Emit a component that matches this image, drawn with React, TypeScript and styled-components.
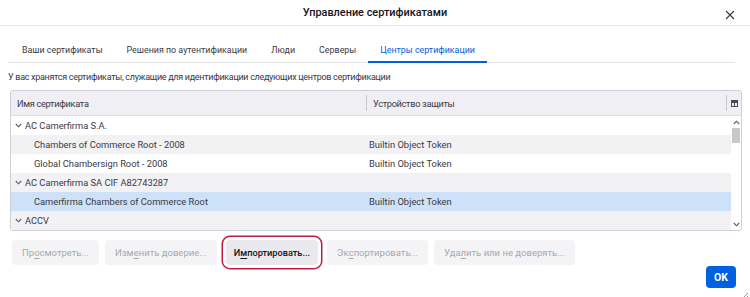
import React from "react";
import styled, { createGlobalStyle } from "styled-components";

const GlobalStyle = createGlobalStyle`
  html, body {
    margin: 0;
    padding: 0;
    background: #ffffff;
  }
  body {
    font-family: Roboto, "Noto Sans", sans-serif;
    color: #15141a;
  }
`;

type TabProps = { active?: boolean };
type RowProps = { striped?: boolean; selected?: boolean };
type ButtonProps = { enabled?: boolean; marked?: boolean };

// whole dialog
const Dialog = styled.div`
  position: relative;
  width: 750px;
  height: 297px;
  display: flex;
  flex-direction: column;
  background: #ffffff;
  overflow: hidden;
`;

const TitleBar = styled.div`
  height: 26px;
  display: flex;
  align-items: center;
  justify-content: center;
  position: relative;
  border-bottom: 1px solid #e8e8e8;
  box-sizing: border-box;
`;

const Title = styled.div`
  font-size: 10.9px;
  font-weight: 500;
  color: #15141a;
`;

const CloseButton = styled.div`
  position: absolute;
  right: 14px;
  top: 6px;
  width: 12px;
  height: 12px;
`;

const Body = styled.div`
  display: flex;
  flex-direction: column;
  padding: 0 8px;
  flex: 1;
`;

const Tabs = styled.div`
  display: flex;
  margin-top: 8px;
  margin-right: 7px;
  height: 28px;
  padding-left: 2px;
  border-bottom: 1px solid #e4e4e4;
`;

const Tab = styled.div<TabProps>`
  display: flex;
  align-items: center;
  padding: 4px 12px 0;
  font-size: 8.9px;
  color: ${(p) => (p.active ? "#0061e0" : "#3a3944")};
  border-bottom: 2px solid ${(p) => (p.active ? "#0061e0" : "transparent")};
  margin-bottom: -1px;
`;

const Description = styled.div`
  margin-top: 7px;
  font-size: 9px;
  letter-spacing: -0.3px;
  color: #3a3944;
  line-height: 14px;
`;

const Table = styled.div`
  margin: 6px 0 0 2px;
  border: 1px solid #cfcfd8;
  border-radius: 3px;
  display: flex;
  flex-direction: column;
  overflow: hidden;
`;

const HeaderRow = styled.div`
  display: grid;
  grid-template-columns: 356px 1fr 14px;
  height: 24px;
  background: #f0f0f4;
  border-bottom: 1px solid #dcdce2;
`;

const HeaderCell = styled.div`
  display: flex;
  align-items: center;
  padding-left: 6px;
  font-size: 9.2px;
  letter-spacing: -0.3px;
  color: #3a3944;
  border-right: 1px solid #c8c8d0;
  margin: 4px 0;
`;

const PickerCell = styled.div`
  display: flex;
  align-items: center;
  justify-content: center;
`;

const RowsArea = styled.div`
  display: flex;
`;

const Rows = styled.div`
  flex: 1;
  display: flex;
  flex-direction: column;
`;

const Row = styled.div<RowProps>`
  display: grid;
  grid-template-columns: 356px 1fr;
  height: 19px;
  align-items: center;
  font-size: 9.3px;
  color: #3a3944;
  background: ${(p) =>
    p.selected ? "#cde2f8" : p.striped ? "#f2f2f4" : "#ffffff"};
`;

const NameCell = styled.div<{ child?: boolean }>`
  display: flex;
  align-items: center;
  gap: 3px;
  padding-left: ${(p) => (p.child ? "23px" : "4px")};
  white-space: nowrap;
`;

const DeviceCell = styled.div`
  padding-left: 2px;
  font-size: 9.4px;
  white-space: nowrap;
`;

const Scrollbar = styled.div`
  width: 10px;
  display: flex;
  flex-direction: column;
  align-items: center;
  background: #ffffff;
`;

const ScrollArrow = styled.div`
  height: 12px;
  display: flex;
  align-items: center;
  justify-content: center;
`;

const ScrollThumb = styled.div`
  width: 8px;
  height: 15px;
  background: #c8c8c8;
`;

const ScrollTrack = styled.div`
  flex: 1;
`;

const ButtonRow = styled.div`
  display: flex;
  gap: 6px;
  margin-top: 9px;
  padding-left: 4px;
`;

const ActionButton = styled.div<ButtonProps>`
  height: 25px;
  display: flex;
  align-items: center;
  padding: 0 ${(p) => (p.marked ? "8px" : "10px")};
  border-radius: 4px;
  font-size: ${(p) => (p.enabled ? "9.2px" : "9.5px")};
  background: ${(p) => (p.enabled ? "#e9e9ed" : "#f4f4f6")};
  color: ${(p) => (p.enabled ? "#15141a" : "#a8a8b0")};
  font-weight: ${(p) => (p.enabled ? 500 : 400)};
  margin: ${(p) => (p.marked ? "0 3px" : "0")};
  box-shadow: ${(p) =>
    p.marked ? "0 0 0 3px #ffffff, 0 0 0 4.5px #c21b3a" : "none"};
  u {
    text-decoration: underline;
    text-underline-offset: 2px;
  }
`;

const Footer = styled.div`
  display: flex;
  justify-content: flex-end;
  margin-top: 1px;
  padding-right: 6px;
`;

const OkButton = styled.div`
  width: 30px;
  height: 22px;
  border-radius: 4px;
  background: #0061e0;
  color: #ffffff;
  font-size: 10.5px;
  font-weight: 700;
  display: flex;
  align-items: center;
  justify-content: center;
`;

const Grip = styled.div`
  position: absolute;
  right: 1px;
  bottom: 1px;
  width: 10px;
  height: 10px;
`;

const Chevron = () => (
  <svg width="7" height="5" viewBox="0 0 7 5">
    <path d="M0.8 1 L3.5 3.8 L6.2 1" fill="none" stroke="#5b5b66" strokeWidth="1.1" />
  </svg>
);

type Entry = { name: string; device?: string; child?: boolean; selected?: boolean };

const entries: Entry[] = [
  { name: "AC Camerfirma S.A." },
  { name: "Chambers of Commerce Root - 2008", device: "Builtin Object Token", child: true },
  { name: "Global Chambersign Root - 2008", device: "Builtin Object Token", child: true },
  { name: "AC Camerfirma SA CIF A82743287" },
  { name: "Camerfirma Chambers of Commerce Root", device: "Builtin Object Token", child: true, selected: true },
  { name: "ACCV" },
];

export default function App() {
  return (
    <Dialog>
      <GlobalStyle />
      <TitleBar>
        <Title>Управление сертификатами</Title>
        <CloseButton>
          <svg width="12" height="12" viewBox="0 0 12 12">
            <path d="M2 2 L10 10 M10 2 L2 10" stroke="#3a3944" strokeWidth="1.1" />
          </svg>
        </CloseButton>
      </TitleBar>
      <Body>
        <Tabs>
          <Tab>Ваши сертификаты</Tab>
          <Tab>Решения по аутентификации</Tab>
          <Tab>Люди</Tab>
          <Tab>Серверы</Tab>
          <Tab active>Центры сертификации</Tab>
        </Tabs>
        <Description>
          У вас хранятся сертификаты, служащие для идентификации следующих центров сертификации
        </Description>
        <Table>
          <HeaderRow>
            <HeaderCell>Имя сертификата</HeaderCell>
            <HeaderCell>Устройство защиты</HeaderCell>
            <PickerCell>
              <svg width="7" height="7" viewBox="0 0 7 7">
                <rect x="0.5" y="0.5" width="6" height="6" fill="none" stroke="#4a4a55" strokeWidth="1" />
                <path d="M0.5 2.5 H6.5 M3.5 2.5 V6.5" stroke="#4a4a55" strokeWidth="1" />
                <rect x="0.5" y="0.5" width="6" height="2" fill="#4a4a55" />
              </svg>
            </PickerCell>
          </HeaderRow>
          <RowsArea>
            <Rows>
              {entries.map((e, i) => (
                <Row key={e.name} striped={i % 2 === 1} selected={e.selected}>
                  <NameCell child={e.child}>
                    {!e.child && <Chevron />}
                    {e.name}
                  </NameCell>
                  <DeviceCell>{e.device ?? ""}</DeviceCell>
                </Row>
              ))}
            </Rows>
            <Scrollbar>
              <ScrollArrow>
                <svg width="7" height="5" viewBox="0 0 7 5">
                  <path d="M0.8 4 L3.5 1.2 L6.2 4" fill="none" stroke="#5b5b66" strokeWidth="1.1" />
                </svg>
              </ScrollArrow>
              <ScrollThumb />
              <ScrollTrack />
              <ScrollArrow>
                <Chevron />
              </ScrollArrow>
            </Scrollbar>
          </RowsArea>
        </Table>
        <ButtonRow>
          <ActionButton>
            Пр<u>о</u>смотреть...
          </ActionButton>
          <ActionButton>
            Изм<u>е</u>нить доверие...
          </ActionButton>
          <ActionButton enabled marked>
            И<u>м</u>портировать...
          </ActionButton>
          <ActionButton>
            Эк<u>с</u>портировать...
          </ActionButton>
          <ActionButton>
            Уда<u>л</u>ить или не доверять...
          </ActionButton>
        </ButtonRow>
        <Footer>
          <OkButton>OK</OkButton>
        </Footer>
      </Body>
      <Grip>
        <svg width="10" height="10" viewBox="0 0 10 10">
          <path d="M9 2 L2 9 M9 5 L5 9 M9 8 L8 9" stroke="#8a8a94" strokeWidth="0.9" />
        </svg>
      </Grip>
    </Dialog>
  );
}
